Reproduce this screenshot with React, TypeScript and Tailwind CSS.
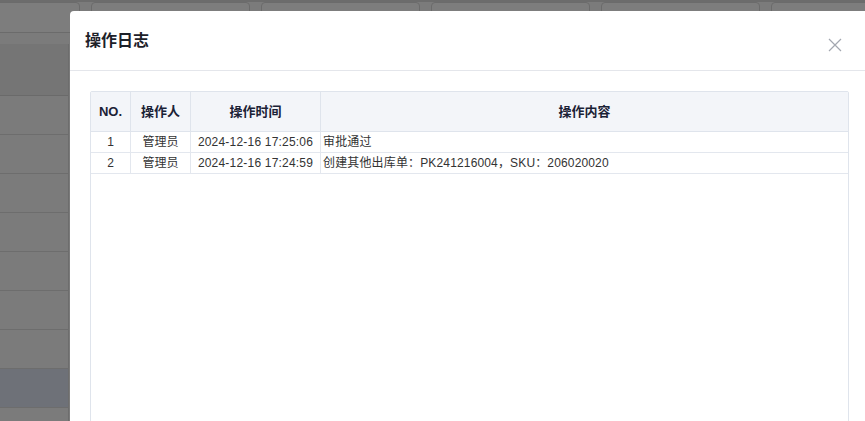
import React from "react";

const rows = [
  { no: "1", user: "管理员", time: "2024-12-16 17:25:06", content: "审批通过" },
  { no: "2", user: "管理员", time: "2024-12-16 17:24:59", content: "创建其他出库单：PK241216004，SKU：206020020" },
];

export default function App() {
  const font = { fontFamily: '"Liberation Sans", "Noto Sans CJK SC", Arial, sans-serif' };
  return (
    <div className="relative w-[865px] h-[421px] overflow-hidden bg-[#7b7b7b]" style={font}>
      {/* background page (dimmed) */}
      <div className="border-t-[2px] border-[#6c6c6c]">
        <div className="flex gap-[11px] ml-[-79px] h-[31px]">
          {[0, 1, 2, 3, 4, 5].map((i) => (
            <div key={i} className="w-[159px] shrink-0 h-[31px] rounded-[4px] border border-[#6b6b6b] bg-[#7d7d7d]" />
          ))}
        </div>
        <div className="h-[11px]" />
        <div className="border-r border-[#6d6d6d] w-[69px]">
          <div className="h-[52px] bg-[#757575] border-b border-[#6a6a6a]" />
          {[0, 1, 2, 3, 4, 5, 6].map((i) => (
            <div key={i} className="h-[39px] border-b border-[#6d6d6d] bg-[#7b7b7b]" />
          ))}
          <div className="h-[39px] border-b border-[#6d6d6d] bg-[#6e7178]" />
          <div className="h-[39px] bg-[#7b7b7b]" />
        </div>
      </div>

      {/* modal */}
      <div className="absolute left-[70px] top-[11px] w-[800px] h-[440px] bg-white rounded-tl-[4px] flex flex-col">
        <div className="h-[60px] shrink-0 border-b border-[#e4e6eb] flex items-center pl-[15px] pr-[28px]">
          <div className="text-[16px] font-bold text-[#1d2129] leading-none">操作日志</div>
          <div className="ml-auto mt-[8px]">
            <svg width="14" height="14" viewBox="0 0 14 14">
              <path d="M1 1 L13 13 M13 1 L1 13" stroke="#a3a7b0" strokeWidth="1.2" fill="none" />
            </svg>
          </div>
        </div>
        <div className="pt-[20px] pl-[20px] pr-[21px]">
          <div className="h-[400px] border border-[#dfe4ec] rounded-[2px]">
            <div className="grid grid-cols-[40px_60px_130px_1fr] h-[40px] bg-[#f3f5f9] border-b border-[#dfe4ec] text-[13px] font-bold text-[#1b2236]">
              <div className="flex items-center justify-center border-r border-[#dfe4ec]">NO.</div>
              <div className="flex items-center justify-center border-r border-[#dfe4ec]">操作人</div>
              <div className="flex items-center justify-center border-r border-[#dfe4ec]">操作时间</div>
              <div className="flex items-center justify-center">操作内容</div>
            </div>
            {rows.map((r) => (
              <div key={r.no} className="grid grid-cols-[40px_60px_130px_1fr] h-[21px] border-b border-[#e3e7ee] text-[12px] text-[#333333]">
                <div className="flex items-center justify-center border-r border-[#e3e7ee]">{r.no}</div>
                <div className="flex items-center justify-center border-r border-[#e3e7ee]">{r.user}</div>
                <div className="flex items-center justify-center border-r border-[#e3e7ee] tracking-[0.2px]">{r.time}</div>
                <div className="flex items-center pl-[2px] tracking-[0.15px]">{r.content}</div>
              </div>
            ))}
          </div>
        </div>
      </div>
    </div>
  );
}
